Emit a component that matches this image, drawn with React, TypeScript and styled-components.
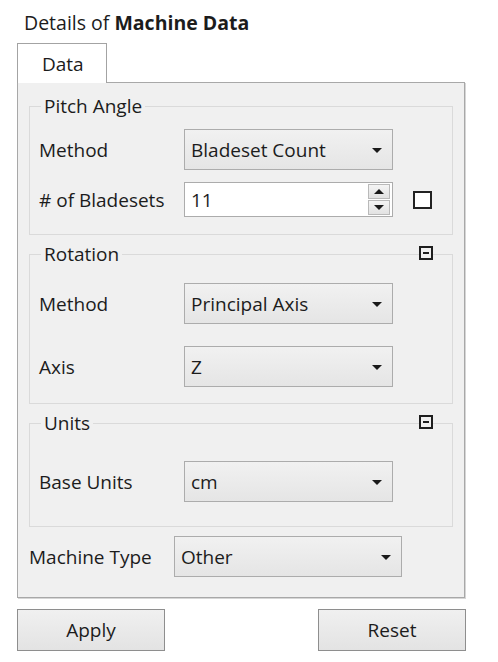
import React from 'react'
import styled, { createGlobalStyle } from 'styled-components'

const GlobalStyle = createGlobalStyle`
  html, body {
    margin: 0;
    padding: 0;
    background: #ffffff;
  }
  body {
    font-family: 'Open Sans', 'Noto Sans', sans-serif;
    color: #1c1c1c;
  }
`

const Page = styled.div`
  width: 498px;
  height: 662px;
  padding: 0 32px 0 17px;
  box-sizing: border-box;
  display: flex;
  flex-direction: column;
`

const Title = styled.div`
  height: 43px;
  padding: 10px 0 0 7px;
  box-sizing: border-box;
  font-size: 19.5px;
  line-height: 26px;
  b {
    font-weight: 700;
  }
`

const TabBar = styled.div`
  display: flex;
  height: 39px;
`

const Tab = styled.div`
  width: 90px;
  box-sizing: border-box;
  border: 1px solid #a3a3a3;
  border-bottom: none;
  background: #ffffff;
  font-size: 19px;
  line-height: 24px;
  padding: 8px 0 0 24px;
  position: relative;
  z-index: 1;
  margin-bottom: -1px;
`

const Panel = styled.div`
  width: 448px;
  height: 516px;
  box-sizing: border-box;
  border: 1px solid #a8a8a8;
  box-shadow: 1px 1px 0 #d6d6d6;
  background: #f0f0f0;
  padding: 12px 11px 0 11px;
  display: flex;
  flex-direction: column;
  gap: 8px;
`

const Group = styled.fieldset<{ $padTop: number; $gap: number; $padBottom: number }>`
  position: relative;
  margin: 0;
  border: 1px solid #dadada;
  padding: ${({ $padTop }) => $padTop}px 9px ${({ $padBottom }) => $padBottom}px 9px;
  display: flex;
  flex-direction: column;
  gap: ${({ $gap }) => $gap}px;
  min-width: 0;
`

const Legend = styled.legend`
  font-size: 19px;
  padding: 0 3px;
  margin-left: 2px;
  line-height: 22px;
`

const Collapse = styled.span`
  position: absolute;
  top: -19px;
  right: 19px;
  width: 14px;
  height: 14px;
  box-sizing: border-box;
  border: 2px solid #1e1e1e;
  background: #f0f0f0;
  display: flex;
  align-items: center;
  justify-content: center;
  &::after {
    content: '';
    width: 6px;
    height: 2px;
    background: #1e1e1e;
  }
`

const Row = styled.div<{ $labelWidth: number }>`
  display: grid;
  grid-template-columns: ${({ $labelWidth }) => $labelWidth}px auto auto;
  justify-content: start;
  align-items: center;
`

const Label = styled.span`
  font-size: 19px;
  white-space: nowrap;
`

const Select = styled.div<{ $width: number }>`
  width: ${({ $width }) => $width}px;
  height: 41px;
  box-sizing: border-box;
  border: 1px solid #acacac;
  background: linear-gradient(#f1f1f1, #e5e5e5);
  display: flex;
  align-items: center;
  justify-content: space-between;
  padding: 0 10px 0 6px;
  font-size: 19px;
`

const Arrow = styled.span`
  width: 0;
  height: 0;
  border-left: 5px solid transparent;
  border-right: 5px solid transparent;
  border-top: 5px solid #1a1a1a;
  margin-top: 1px;
`

const Spin = styled.div`
  width: 209px;
  height: 35px;
  box-sizing: border-box;
  border: 1px solid #acacac;
  background: #ffffff;
  display: flex;
  align-items: stretch;
  font-size: 19px;
`

const SpinValue = styled.span`
  flex: 1;
  display: flex;
  align-items: center;
  padding-left: 6px;
`

const SpinButtons = styled.div`
  width: 22px;
  margin: 1px 2px 1px 0;
  display: flex;
  flex-direction: column;
  gap: 1px;
`

const SpinBtn = styled.span<{ $up?: boolean }>`
  flex: 1;
  border: 1px solid #b9b9b9;
  background: linear-gradient(#f4f4f4, #e2e2e2);
  display: flex;
  align-items: center;
  justify-content: center;
  &::after {
    content: '';
    border-left: 5px solid transparent;
    border-right: 5px solid transparent;
    ${({ $up }) => ($up ? 'border-bottom: 5px solid #1a1a1a;' : 'border-top: 5px solid #1a1a1a;')}
  }
`

const Check = styled.span`
  width: 19px;
  height: 18px;
  box-sizing: border-box;
  border: 2px solid #222;
  background: #ffffff;
  margin-left: 20px;
`

const TypeRow = styled.div`
  display: grid;
  grid-template-columns: 145px auto;
  align-items: center;
  margin-top: 1px;
`

const Buttons = styled.div`
  display: flex;
  justify-content: space-between;
  margin-top: 11px;
`

const Button = styled.button`
  width: 148px;
  height: 42px;
  border: 1px solid #8e8e8e;
  background: linear-gradient(#f0f0f0, #e3e3e3);
  font-family: inherit;
  font-size: 19px;
  color: #1c1c1c;
  padding: 0;
`

const Drop = ({ value, width = 209 }: { value: string; width?: number }) => (
  <Select $width={width}>
    <span>{value}</span>
    <Arrow />
  </Select>
)

export default function App() {
  return (
    <>
      <GlobalStyle />
      <Page>
        <Title>
          Details of <b>Machine Data</b>
        </Title>
        <TabBar>
          <Tab>Data</Tab>
        </TabBar>
        <Panel>
          <Group $padTop={12} $gap={12} $padBottom={17}>
            <Legend>Pitch Angle</Legend>
            <Row $labelWidth={145}>
              <Label>Method</Label>
              <Drop value="Bladeset Count" />
            </Row>
            <Row $labelWidth={145}>
              <Label># of Bladesets</Label>
              <Spin>
                <SpinValue>11</SpinValue>
                <SpinButtons>
                  <SpinBtn $up />
                  <SpinBtn />
                </SpinButtons>
              </Spin>
              <Check />
            </Row>
          </Group>
          <Group $padTop={18} $gap={22} $padBottom={16}>
            <Legend>Rotation</Legend>
            <Collapse />
            <Row $labelWidth={145}>
              <Label>Method</Label>
              <Drop value="Principal Axis" />
            </Row>
            <Row $labelWidth={145}>
              <Label>Axis</Label>
              <Drop value="Z" />
            </Row>
          </Group>
          <Group $padTop={27} $gap={0} $padBottom={24}>
            <Legend>Units</Legend>
            <Collapse />
            <Row $labelWidth={145}>
              <Label>Base Units</Label>
              <Drop value="cm" />
            </Row>
          </Group>
          <TypeRow>
            <Label>Machine Type</Label>
            <Drop value="Other" width={228} />
          </TypeRow>
        </Panel>
        <Buttons>
          <Button>Apply</Button>
          <Button>Reset</Button>
        </Buttons>
      </Page>
    </>
  )
}
